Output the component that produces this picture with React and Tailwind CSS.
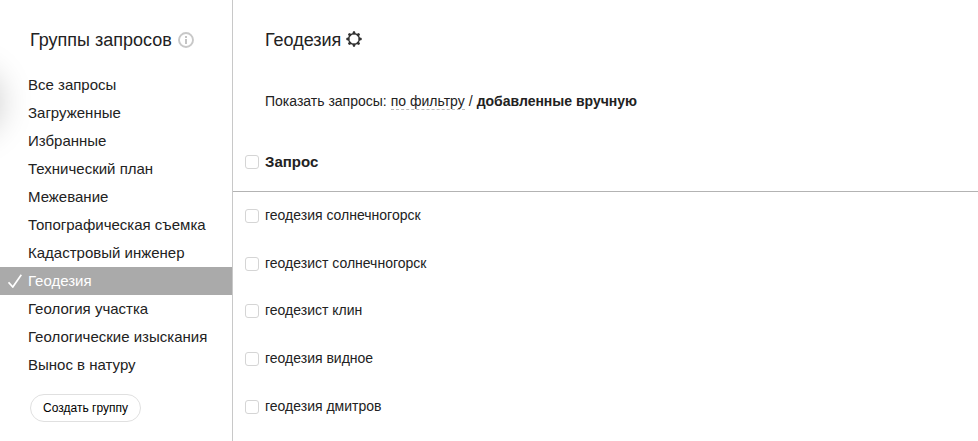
import React, { useState } from "react";

const GROUPS = [
  "Все запросы",
  "Загруженные",
  "Избранные",
  "Технический план",
  "Межевание",
  "Топографическая съемка",
  "Кадастровый инженер",
  "Геодезия",
  "Геология участка",
  "Геологические изыскания",
  "Вынос в натуру",
];

const QUERIES = [
  "геодезия солнечногорск",
  "геодезист солнечногорск",
  "геодезист клин",
  "геодезия видное",
  "геодезия дмитров",
];

const InfoIcon = () => (
  <svg width="16" height="16" viewBox="0 0 16 16" fill="none">
    <circle cx="8" cy="8" r="7" stroke="#c8c8c8" strokeWidth="1.9" />
    <path d="M7 4h2v2H7zM7 7h2v5H7z" fill="#c4c4c4" />
  </svg>
);

const TEETH = [0, 45, 90, 135, 180, 225, 270, 315];

const GearIcon = () => (
  <svg width="16" height="16" viewBox="0 0 16 16" fill="none" className="-mt-0.5">
    <circle cx="8" cy="8" r="5.3" stroke="#333" strokeWidth="1.4" />
    {TEETH.map((angle) => (
      <path key={angle} d="M6.3 2.8L7.1 .3h1.8l.8 2.5L8 3.6z" fill="#333" transform={`rotate(${angle} 8 8)`} />
    ))}
  </svg>
);

const CheckIcon = () => (
  <svg width="14" height="14" viewBox="0 0 14 14" fill="none">
    <path d="M.5 8.2L4.8 13 13.3.7" stroke="#fff" strokeWidth="1.7" />
  </svg>
);

const Checkbox = ({ checked, onChange }) => (
  <input
    type="checkbox"
    checked={checked}
    onChange={onChange}
    className="block h-3.5 w-3.5 shrink-0 appearance-none rounded-[3px] border border-[#d5d5d5] bg-white checked:bg-[#aaa]"
  />
);

const App = () => {
  const [group, setGroup] = useState("Геодезия");
  const [selected, setSelected] = useState([]);

  const toggle = (query) => {
    setSelected(
      selected.includes(query) ? selected.filter((q) => q !== query) : [...selected, query]
    );
  };

  const allSelected = selected.length === QUERIES.length;

  return (
    <div className="relative flex h-[441px] w-full overflow-hidden bg-white font-['Liberation_Sans',Arial,sans-serif] text-[#222]">
      {/* Shadow of the panel beyond the left edge */}
      <div className="absolute top-[74px] -left-[60px] h-14 w-14 rounded-full shadow-[0_0_34px_4px_rgba(0,0,0,0.22)]" />

      <aside className="flex w-[233px] shrink-0 flex-col border-r border-[#c8c8c8]">
        <div className="flex h-[71px] items-center gap-1.5 pt-2 pl-[30px]">
          <h2 className="text-[18px] leading-6">Группы запросов</h2>
          <InfoIcon />
        </div>

        <ul>
          {GROUPS.map((name) => (
            <li key={name}>
              <button
                type="button"
                onClick={() => setGroup(name)}
                className={`flex h-7 w-full items-center text-left text-[15px] ${
                  name === group ? "bg-[#aaa] text-white" : ""
                }`}
              >
                <span className="w-7 shrink-0 pl-2">{name === group && <CheckIcon />}</span>
                {name}
              </button>
            </li>
          ))}
        </ul>

        <button
          type="button"
          className="mt-[15px] ml-[30px] h-7 w-[111px] rounded-full border border-[#e0e0e0] text-xs text-black"
        >
          Создать группу
        </button>
      </aside>

      <main className="flex grow flex-col">
        <div className="flex h-[71px] items-center gap-[5px] pt-2 pl-8">
          <h1 className="text-[18px] leading-6">{group}</h1>
          <GearIcon />
        </div>

        <p className="flex h-[60px] items-center gap-1 pl-8 text-sm whitespace-nowrap">
          <span>Показать запросы:</span>
          <a className="border-b border-dashed border-[#bbb] leading-4">по фильтру</a>
          <span>/</span>
          <b>добавленные вручную</b>
        </p>

        <div className="flex h-[61px] items-center gap-1.5 border-b border-[#b3b3b3] pt-0.5 pl-3 text-[15px] font-bold">
          <Checkbox checked={allSelected} onChange={() => setSelected(allSelected ? [] : QUERIES)} />
          Запрос
        </div>

        <ul>
          {QUERIES.map((query) => (
            <li key={query} className="flex h-[47.75px] items-center gap-1.5 pl-3 text-sm">
              <Checkbox checked={selected.includes(query)} onChange={() => toggle(query)} />
              <span className="pb-0.5">{query}</span>
            </li>
          ))}
        </ul>
      </main>
    </div>
  );
};

export default App;
